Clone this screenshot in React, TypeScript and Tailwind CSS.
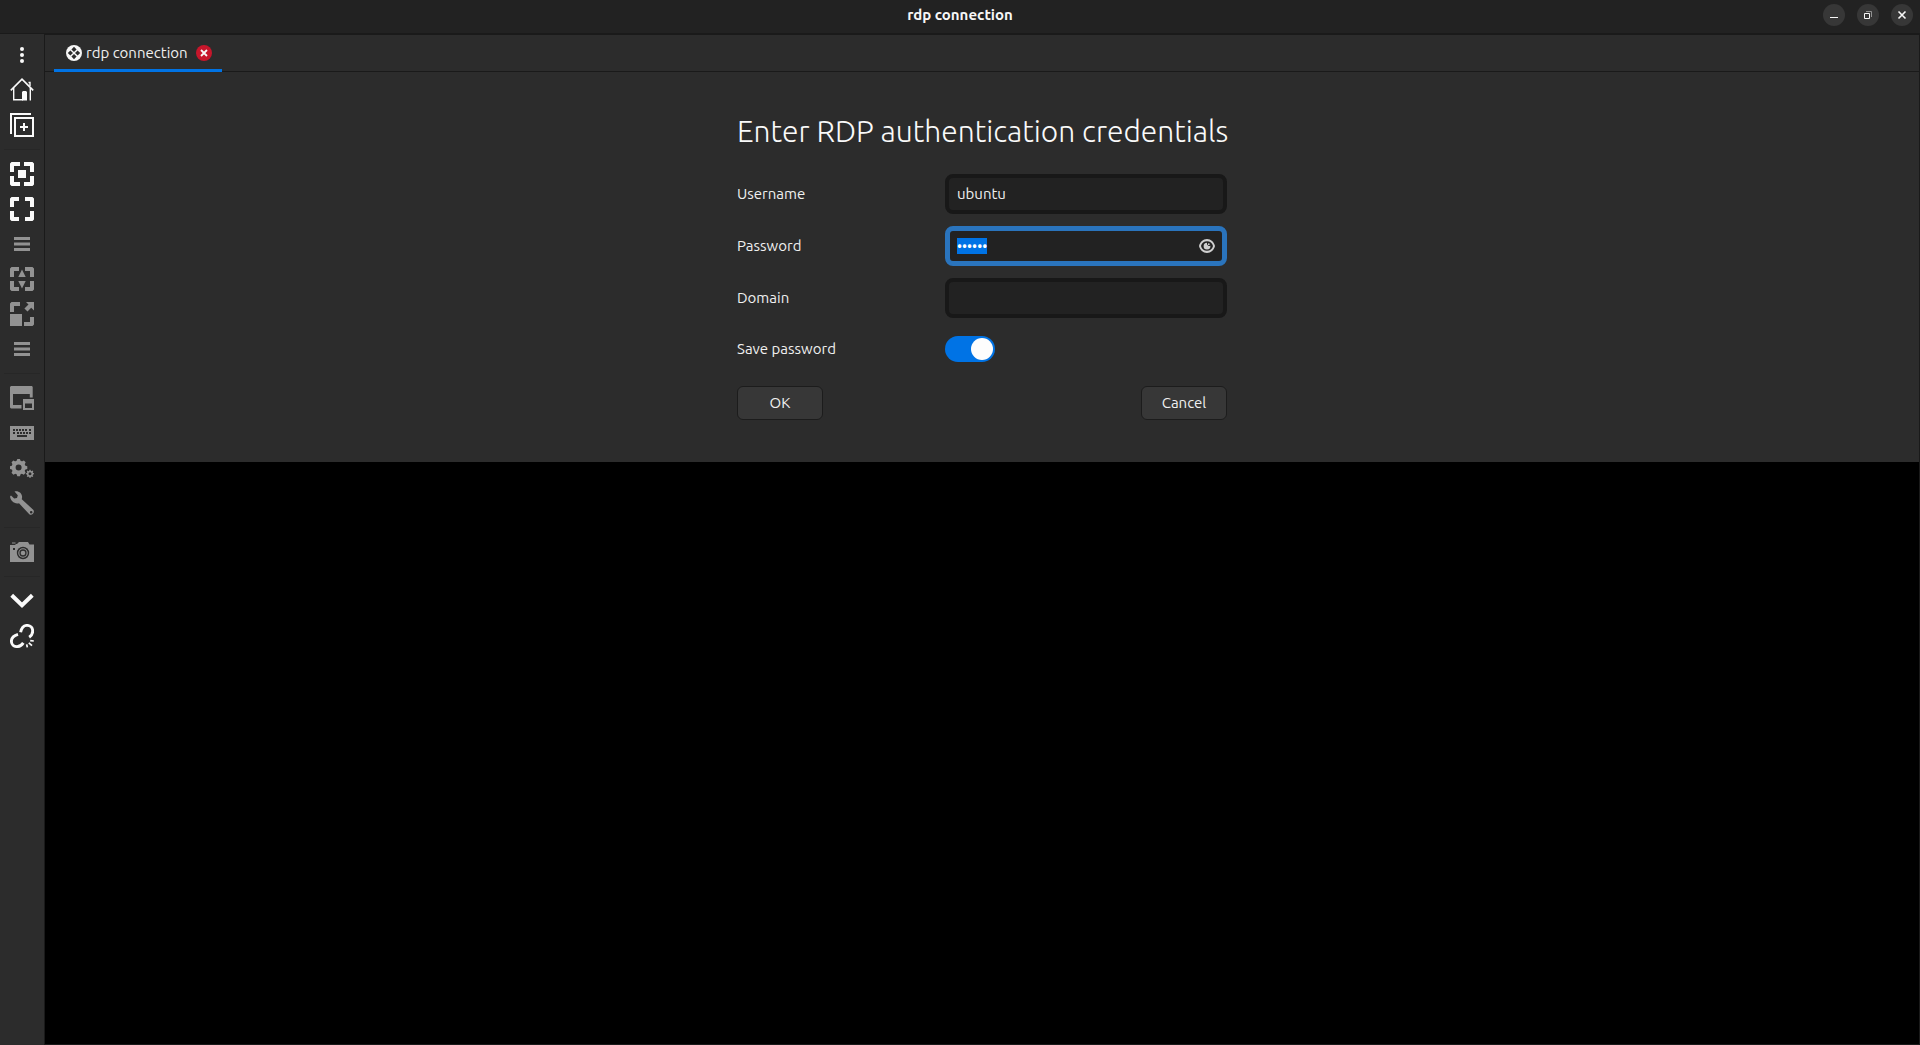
import { useEffect, useRef, type ReactNode } from "react";

const GEAR_TEETH = Array.from({ length: 8 }, (_, i) => i * 45);

function Svg({ children, size = 24 }: { children: ReactNode; size?: number }) {
  return (
    <svg width={size} height={size} viewBox={`0 0 ${size} ${size}`} fill="currentColor" aria-hidden="true">
      {children}
    </svg>
  );
}

function Corners({ w }: { w: number }) {
  const r = 24 - w;
  return (
    <>
      <path d={`M0 10V1.5L1.5 0H${w}V4H4V10Z`} />
      <path d={`M${r} 0H22.5L24 1.5V10H20V4H${r}Z`} />
      <path d={`M0 14V22.5L1.5 24H${w}V20H4V14Z`} />
      <path d={`M${r} 24H22.5L24 22.5V14H20V20H${r}Z`} />
    </>
  );
}

const Dots = () => (
  <Svg>
    <circle cx="12" cy="6" r="2" />
    <circle cx="12" cy="12" r="2" />
    <circle cx="12" cy="18" r="2" />
  </Svg>
);

const Home = () => (
  <Svg>
    <path d="M.8 12.4 12 1.2 23.2 12.4" fill="none" stroke="currentColor" strokeWidth="1.6" />
    <path d="M3.7 10V21.7H13M20.3 10V22.4M18.5 4.5H20V8" fill="none" stroke="currentColor" strokeWidth="1.4" />
    <path d="M12 14 13 13H16L17 14V22.4H12Z" />
  </Svg>
);

const NewWindow = () => (
  <Svg>
    <path d="M0 0H21V2H2V21H0Z" />
    <path d="M5 5H23V23H5Z" fill="none" stroke="currentColor" strokeWidth="2" />
    <path d="M13 10H15V13H18V15H15V18H13V15H10V13H13Z" />
  </Svg>
);

const Fit = () => (
  <Svg>
    <Corners w={10} />
    <rect x="8" y="8" width="8" height="8" />
  </Svg>
);

const Fullscreen = () => (
  <Svg>
    <Corners w={9} />
  </Svg>
);

const Menu = () => (
  <Svg>
    <rect x="4" y="5" width="16" height="3" />
    <rect x="4" y="10.500" width="16" height="3" />
    <rect x="4" y="16" width="16" height="3" />
  </Svg>
);

const Dynamic = () => (
  <Svg>
    <Corners w={9} />
    <path d="M12 2.5 15.7 10H8.3ZM12 21.5 15.7 14H8.3Z" />
  </Svg>
);

const Scale = () => (
  <Svg>
    <rect y="12" width="12" height="12" />
    <path d="M0 10V1.5L1.5 0H10V4H4V10ZM14 24H22.5L24 22.5V15H20V20H14Z" />
    <path d="M16 0H24V8.5L21.2 5.7 17.5 9.6 14.4 6.5 18.5 2.6Z" />
  </Svg>
);

const Monitors = () => (
  <Svg>
    <path fillRule="evenodd" d="M1 0H22L22.7 1V11.5H19.8V8H3V19H11.5V22.5H1L0 21.5V1Z" />
    <path fillRule="evenodd" d="M13 13H24V24H13ZM15 17.5V22H22V17.5Z" />
  </Svg>
);

const Keyboard = () => (
  <Svg>
    <rect y="5" width="24" height="14" />
    <g fill="#2c2c2c">
      {[3, 6, 9, 12, 15, 19].map((x) => (
        <rect key={x} x={x} y="8" width="2" height="2" />
      ))}
      {[3, 7, 10, 13, 16, 19].map((x) => (
        <rect key={x} x={x} y="11" width="2" height="2" />
      ))}
      <rect x="7" y="14" width="10" height="2" />
    </g>
  </Svg>
);

const Gears = () => (
  <Svg>
    <g transform="translate(8.6 11.6)">
      <circle r="5" fill="none" stroke="currentColor" strokeWidth="4" />
      {GEAR_TEETH.map((a) => (
        <path key={a} transform={`rotate(${a})`} d="M-2.2 -6 -1.3 -8.7H1.3L2.2 -6Z" />
      ))}
    </g>
    <g transform="translate(20 17.8)">
      <circle r="2.3" fill="none" stroke="currentColor" strokeWidth="1.6" />
      {GEAR_TEETH.map((a) => (
        <path key={a} transform={`rotate(${a})`} d="M-.8 -2.8 -.5 -4.1H.5L.8 -2.8Z" />
      ))}
    </g>
  </Svg>
);

const Wrench = () => (
  <Svg>
    <path
      fillRule="evenodd"
      d="M4.5 .4C8.5-.6 12.4 2.2 12.1 6.3L11.8 8.3 23.2 18.8C25.3 21.2 22 25.3 19.3 23.3L9 12.2C4.5 13.2 .2 10 .1 5.3L1 4.6 4.2 7.5 7 6.9 7.8 4.2ZM21.2 20A1.3 1.3 0 1 0 21.2 22.6 1.3 1.3 0 1 0 21.2 20Z"
    />
  </Svg>
);

const Camera = () => (
  <Svg>
    <path d="M0 4H7L9 2H18L19.5 4.5H24V22H0ZM2 2.6H5.5V3.4H2Z" />
    <circle cx="13" cy="13" r="6.2" fill="#2c2c2c" />
    <circle cx="13" cy="13" r="4.2" fill="none" stroke="currentColor" strokeWidth="1.1" />
    <circle cx="13" cy="13" r="2.3" />
    <rect x="3" y="8" width="2" height="2" fill="#2c2c2c" />
    <rect x="0" y="4" width="5.5" height="1" fill="#2c2c2c" />
  </Svg>
);

const ChevronDown = () => (
  <Svg>
    <path d="M1.7 6.3 12 16.2 22.3 6.3" fill="none" stroke="currentColor" strokeWidth="4" />
  </Svg>
);

const BrokenLink = () => (
  <Svg>
    <g fill="none" stroke="currentColor" strokeWidth="2.9">
      <path d="M10.6 8.2C11.4 4.5 13.6 1.4 17 1.4 20.6 1.4 22.7 4 22.7 7.1 22.7 9.7 21.4 11.7 19.2 13.2" />
      <path d="M8 10.4C3.9 11.6 1.4 14 1.4 17.2 1.4 20.4 3.9 22.6 7 22.6 9.6 22.6 11.8 21.2 13.3 18.9" />
      <path d="M16.7 20.4 17.3 23.4M18.8 18.8 22 21.7M20.2 16.6 23.8 17" strokeWidth="1.7" />
    </g>
  </Svg>
);

type Tool = { label: string; icon: ReactNode; active?: boolean };

const TOOL_GROUPS: Tool[][] = [
  [
    { label: "Menu", icon: <Dots />, active: true },
    { label: "Main window", icon: <Home />, active: true },
    { label: "Duplicate connection", icon: <NewWindow />, active: true },
  ],
  [
    { label: "Resize to fit", icon: <Fit />, active: true },
    { label: "Fullscreen", icon: <Fullscreen />, active: true },
    { label: "Fullscreen options", icon: <Menu /> },
    { label: "Dynamic resolution", icon: <Dynamic /> },
    { label: "Scaled mode", icon: <Scale /> },
    { label: "Scaling options", icon: <Menu /> },
  ],
  [
    { label: "Multi monitor", icon: <Monitors /> },
    { label: "Grab keyboard", icon: <Keyboard /> },
    { label: "Preferences", icon: <Gears /> },
    { label: "Tools", icon: <Wrench /> },
  ],
  [{ label: "Screenshot", icon: <Camera /> }],
  [
    { label: "Minimise window", icon: <ChevronDown />, active: true },
    { label: "Disconnect", icon: <BrokenLink />, active: true },
  ],
];

function Sidebar() {
  return (
    <nav aria-label="Connection tools" className="flex w-[45px] shrink-0 flex-col items-center border-r border-[#1a1a1a] bg-[#2c2c2c] pt-[9px]">
      {TOOL_GROUPS.map((group, i) => (
        <div key={i} className="flex w-full flex-col items-center gap-[11px]">
          {i > 0 && <div className="mt-3 mb-px h-px w-9 bg-[#272727]" />}
          {group.map((tool, j) => (
            <button
              key={j}
              type="button"
              aria-label={tool.label}
              className={tool.active ? "size-6 text-[#fafafa]" : "size-6 text-[#929292]"}
            >
              {tool.icon}
            </button>
          ))}
        </div>
      ))}
    </nav>
  );
}

function TitleBar() {
  const button = "flex size-[22px] items-center justify-center rounded-full bg-[#373737] text-[#f7f7f7]";
  return (
    <header className="grid shrink-0 grid-cols-[1fr_auto_1fr] items-center border-b border-[#1a1a1a] bg-[#222222] px-[7px] pt-1 pb-[7px]">
      <span />
      <h1 className="leading-[22px] font-bold text-[#f7f7f7]">rdp connection</h1>
      <div className="flex justify-end gap-3">
        <button type="button" aria-label="Minimise" className={button}>
          <Svg size={22}>
            <rect x="7" y="13" width="8" height="1" />
          </Svg>
        </button>
        <button type="button" aria-label="Restore" className={button}>
          <Svg size={22}>
            <path d="M7.5 9.5H12.5V14.5H7.5Z" fill="none" stroke="currentColor" />
            <path d="M9 7.5H14.5V13" fill="none" stroke="#929292" />
          </Svg>
        </button>
        <button type="button" aria-label="Close" className={button}>
          <Svg size={22}>
            <path d="M7.5 7.5 14.5 14.5M14.5 7.5 7.5 14.5" fill="none" stroke="currentColor" strokeWidth="1.6" />
          </Svg>
        </button>
      </div>
    </header>
  );
}

function TabStrip() {
  return (
    <div className="flex shrink-0 border-t border-[#1a1a1a] px-[9px] shadow-[inset_0_-1px_0_#1a1a1a]">
      <div className="flex items-center border-b-3 border-[#0073e5] pt-2 pr-2.5 pb-1.5 pl-3">
        <button type="button" className="flex items-center gap-1 text-[#f0f0f0]">
          <Svg size={16}>
            <circle cx="8" cy="8" r="8" fill="#f7f7f7" />
            <path
              fill="#2c2c2c"
              d="M8 1.8 10.6 4.4 8 7 5.4 4.4ZM8 9 10.6 11.6 8 14.2 5.4 11.6ZM4.4 5.4 7 8 4.4 10.6 1.8 8ZM11.6 5.4 14.2 8 11.6 10.6 9 8Z"
            />
          </Svg>
          <span className="leading-5">rdp connection</span>
        </button>
        <button type="button" aria-label="Close tab" className="ml-2">
          <Svg size={16}>
            <circle cx="8" cy="8" r="8" fill="#c7162b" />
            <path d="M5 5 11 11M11 5 5 11" stroke="#f7f7f7" strokeWidth="1.8" />
          </Svg>
        </button>
      </div>
    </div>
  );
}

function Credentials() {
  const password = useRef<HTMLInputElement>(null);
  useEffect(() => {
    password.current?.focus();
    password.current?.select();
  }, []);

  const field = "h-10 w-full rounded-lg border-4 border-[#181818] bg-[#222222] px-2 pb-0.5 text-[#f0f0f0] outline-none";
  const button = "h-[34px] w-[86px] rounded-md border border-[#1c1c1c] bg-[#373737] pb-px text-[#f0f0f0]";
  const row = "grid grid-cols-[208px_1fr] items-center";

  return (
    <form className="flex justify-center pt-[39px] pb-[42px]" onSubmit={(e) => e.preventDefault()}>
      <div className="flex w-[490px] flex-col gap-3">
        <h2 className="mb-[11px] text-[30px] leading-10 font-light whitespace-nowrap text-[#fafafa]">
          Enter RDP authentication credentials
        </h2>
        <div className={row}>
          <label htmlFor="username">Username</label>
          <input id="username" type="text" defaultValue="ubuntu" className={field} />
        </div>
        <div className={row}>
          <label htmlFor="password">Password</label>
          <div className="relative">
            <input
              id="password"
              ref={password}
              type="password"
              defaultValue="ubuntu"
              className="block h-10 w-full rounded-lg border-5 border-[#2a74bd] bg-[#222222] pr-8 pl-[7px] text-[14px] text-white outline-none selection:bg-[#0073e5] selection:text-white"
            />
            <button type="button" aria-label="Show password" className="absolute top-3 right-3 text-[#cfcfcf]">
              <Svg size={16}>
                <path
                  fillRule="evenodd"
                  d="M8 1C4 1 1 4 0 8 1 12 4 15 8 15S15 12 16 8C15 4 12 1 8 1ZM8 3.2C11 3.2 13.4 5.2 14 8 13.4 10.8 11 12.8 8 12.8S2.6 10.8 2 8C2.6 5.2 5 3.2 8 3.2Z"
                />
                <path d="M8 4.7C7.6 6.6 9 8.3 11.4 7.8A3.4 3.4 0 1 1 8 4.7Z" />
                <circle cx="9.8" cy="6.2" r=".9" />
              </Svg>
            </button>
          </div>
        </div>
        <div className={row}>
          <label htmlFor="domain">Domain</label>
          <input id="domain" type="text" className={field} />
        </div>
        <div className={`${row} mt-1.5`}>
          <label htmlFor="save">Save password</label>
          <input
            id="save"
            type="checkbox"
            role="switch"
            defaultChecked
            className="flex h-[26px] w-[50px] appearance-none items-center justify-start rounded-full bg-[#4a4a4a] px-0.5 before:size-[22px] before:rounded-full before:bg-[#fdfdfd] checked:justify-end checked:bg-[#0073e5]"
          />
        </div>
        <div className="mt-3 flex justify-between">
          <button type="submit" className={button}>
            OK
          </button>
          <button type="button" className={button}>
            Cancel
          </button>
        </div>
      </div>
    </form>
  );
}

export default function App() {
  return (
    <div className="flex min-h-screen flex-col bg-[#2c2c2c] font-['Ubuntu','Noto_Sans',sans-serif] text-[15px] leading-[18px] text-[#f0f0f0]">
      <TitleBar />
      <div className="flex grow">
        <Sidebar />
        <main className="flex grow flex-col border-r border-b border-[#1a1a1a]">
          <TabStrip />
          <Credentials />
          <section aria-label="Remote screen" className="grow bg-black" />
        </main>
      </div>
    </div>
  );
}
